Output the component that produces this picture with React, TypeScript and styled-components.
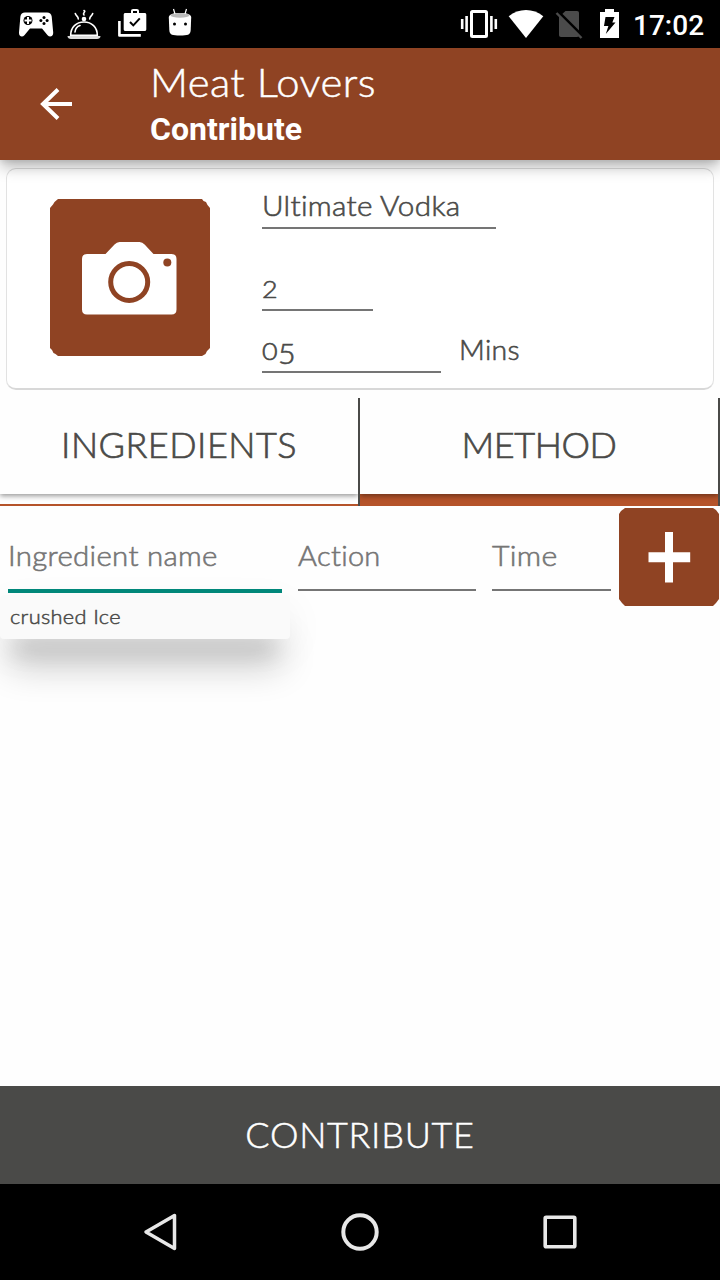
import React from "react";
import styled, { createGlobalStyle } from "styled-components";

const GlobalStyle = createGlobalStyle`
  * { box-sizing: border-box; }
  body { margin: 0; background: #fff; }
`;

const thin = `Lato, "Open Sans", sans-serif`;
const brown = "#8f4323";

const Screen = styled.div`
  width: 720px;
  height: 1280px;
  display: flex;
  flex-direction: column;
  overflow: hidden;
  background: #fefefe;
  color: #4a4a48;
  font-family: ${thin};
`;

const StatusBar = styled.header`
  display: flex;
  justify-content: space-between;
  flex: 0 0 48px;
  height: 48px;
  padding: 0 15px 0 18px;
  background: #000;
`;

const StatusGroup = styled.div`
  display: flex;
  height: 48px;
`;

const Clock = styled.span`
  width: 79px;
  height: 48px;
  padding-left: 7px;
  font: 500 28px/51px Roboto, sans-serif;
  color: #fff;
  white-space: nowrap;
`;

const Icon = styled.svg`
  display: block;
  flex: none;
`;

const AppBar = styled.div`
  position: relative;
  z-index: 2;
  display: flex;
  align-items: center;
  flex: 0 0 112px;
  padding-left: 38px;
  background: ${brown};
  box-shadow: 0 8px 14px -1px rgba(0, 0, 0, 0.28), 0 1px 6px rgba(0, 0, 0, 0.1);
`;

const Titles = styled.div`
  align-self: flex-start;
  padding: 11px 0 0 76px;
  color: #fff;
`;

const Title = styled.h1`
  margin: 0;
  height: 47px;
  font: 300 40px/46px ${thin};
  letter-spacing: 0.4px;
  transform: scaleX(1.045);
  transform-origin: left;
  -webkit-text-stroke: 0.5px currentColor;
`;

const Subtitle = styled.h2`
  margin: 0;
  font: 700 32px/46px Roboto, sans-serif;
`;

const Card = styled.section`
  display: flex;
  flex: 0 0 222px;
  margin: 8px 6px;
  padding: 30px 0 0 43px;
  border: 1px solid #e2e2e2;
  border-top-color: #dcdcdc;
  border-bottom: 2px solid #d8d8d8;
  border-radius: 10px;
  background: #fff;
`;

const Details = styled.div`
  display: flex;
  flex-direction: column;
  margin-left: 52px;
`;

const Field = styled.div<{ $width: number; $height?: number; $top?: number }>`
  width: ${(p) => p.$width}px;
  height: ${(p) => p.$height ?? 40}px;
  margin-top: ${(p) => p.$top ?? 0}px;
  border-bottom: 2px solid #757575;
`;

const Label = styled.span<{ $stretch?: number; $hint?: boolean; $line?: number }>`
  display: block;
  font: 300 28px/${(p) => p.$line ?? 32}px ${thin};
  letter-spacing: 0.3px;
  transform: scaleX(${(p) => p.$stretch ?? 1});
  transform-origin: left;
  color: ${(p) => (p.$hint ? "#757575" : "#4a4a48")};
  -webkit-text-stroke: 0.6px currentColor;
  white-space: nowrap;
`;

const Digit = styled.span<{ $drop?: number; $size?: number }>`
  display: inline-block;
  margin-right: 1.7px;
  font-size: ${(p) => p.$size ?? 24}px;
  line-height: 1;
  transform: translateY(${(p) => p.$drop ?? 0}px) scaleX(1.12);
  transform-origin: left;
`;

const TimeRow = styled.div`
  display: flex;
  gap: 18px;
  margin-top: 22px;
`;

const Tabs = styled.nav`
  display: flex;
  flex: 0 0 108px;
`;

const Tab = styled.div<{ $active?: boolean }>`
  flex: 1;
  height: 108px;
  border-right: 2px solid #4a4a48;
  background: ${(p) =>
    p.$active ? "#b5532a" : "linear-gradient(#fefefe 106px, #b5532a 106px)"};
`;

const TabFace = styled.div<{ $spacing: number }>`
  height: 96px;
  background: #fefefe;
  box-shadow: 0 2px 5px rgba(0, 0, 0, 0.4);
  clip-path: inset(0 0 -12px 0);
  text-align: center;
  font: 300 36px/93px ${thin};
  letter-spacing: ${(p) => p.$spacing}px;
  -webkit-text-stroke: 0.7px currentColor;
`;

const EntryRow = styled.div`
  position: relative;
  display: flex;
  flex: 0 0 102px;
  padding: 0 1px 0 8px;
`;

const EntryField = styled.div<{ $width: number; $gap: number; $focus?: boolean }>`
  width: ${(p) => p.$width}px;
  height: ${(p) => (p.$focus ? 87 : 85)}px;
  margin-right: ${(p) => p.$gap}px;
  padding-top: 33px;
  border-bottom: ${(p) => (p.$focus ? "4px solid #00897b" : "2px solid #757575")};
`;

const AddButton = styled.div`
  margin-top: 2px;
`;

const Suggestions = styled.div`
  position: absolute;
  left: 0;
  top: 89px;
  width: 290px;
  height: 44px;
  padding-left: 10px;
  border-radius: 4px;
  background: #fafafa;
  box-shadow: 0 30px 20px -14px rgba(0, 0, 0, 0.1),
    0 36px 36px -8px rgba(0, 0, 0, 0.2), 0 12px 40px rgba(0, 0, 0, 0.06);
`;

const Suggestion = styled.span`
  display: inline-block;
  font: 300 20px/43px ${thin};
  letter-spacing: 0.3px;
  transform: scaleX(1.09);
  transform-origin: left;
  -webkit-text-stroke: 0.5px currentColor;
`;

const Spacer = styled.main`
  flex: 1;
`;

const Submit = styled.div`
  flex: 0 0 98px;
  background: #4a4a48;
  color: #fff;
  text-align: center;
  font: 300 36px/97px ${thin};
  letter-spacing: 0.7px;
  -webkit-text-stroke: 0.5px currentColor;
`;

const NavBar = styled.footer`
  display: flex;
  align-items: center;
  justify-content: center;
  gap: 160px;
  flex: 0 0 96px;
  background: #000;
`;

const Gamepad = () => (
  <Icon width="42" height="48" viewBox="18 0 42 48">
    <path
      d="M25 12.5h22c2.6 0 4.3 1.4 4.700 4l1.500 16c.3 3.700-3.400 5.200-5.600 2.700L42 28.500H30l-5.600 6.700c-2.200 2.500-5.700 1-5.400-2.700l1.400-16c.4-2.600 2-4 4.600-4Z"
      fill="#fff"
    />
    <circle cx="28" cy="20.5" r="4.5" fill="#000" />
    <path d="M28 17v7M24.5 20.5h7" stroke="#fff" strokeWidth="2" />
    <g fill="#000">
      <circle cx="44" cy="17.4" r="1.5" />
      <circle cx="44" cy="23.6" r="1.5" />
      <circle cx="40.9" cy="20.5" r="1.5" />
      <circle cx="47.1" cy="20.5" r="1.5" />
    </g>
  </Icon>
);

const Cloche = () => (
  <Icon width="50" height="48" viewBox="60 0 50 48">
    <g fill="none" stroke="#fff" strokeWidth="1.6" strokeLinecap="round">
      <path d="M70.7 35.3c0-8 5.5-13.3 13.3-13.3s13.3 5.3 13.3 13.3Z" />
      <path d="M75 32c.3-3.5 2-5.5 5-6.5" />
      <path d="M75.3 13.5c.5 2.5 3 2.5 3 5.5M92.7 13.5c-.5 2.5-3 2.5-3 5.5M84 10.5c2.5 1-2 2.5 0 4.5" />
    </g>
    <circle cx="84" cy="19" r="2.3" fill="#fff" />
    <path d="M67.5 36h33c0 2-1.5 3-3.5 3H71c-2 0-3.5-1-3.5-3Z" fill="#ddd" />
  </Icon>
);

const ShopCheck = () => (
  <Icon width="50" height="48" viewBox="110 0 50 48">
    <path
      fillRule="evenodd"
      fill="#fff"
      d="M131 13v-1.8c0-1.5.8-2.2 2.2-2.2h3.6c1.4 0 2.2.7 2.2 2.2V13h5.500c1.200 0 1.800.6 1.800 1.800v14.400c0 1.200-.6 1.800-1.800 1.800h-19c-1.200 0-1.800-.6-1.800-1.800V14.800c0-1.200.6-1.800 1.800-1.800Zm2 0h4v-2h-4Z"
    />
    <path d="m130 22 3.3 3.4 6.5-7" fill="none" stroke="#000" strokeWidth="2" />
    <path d="M119.4 21v14.400h21.400" fill="none" stroke="#fff" strokeWidth="2.6" strokeLinejoin="round" />
  </Icon>
);

const Droid = () => (
  <Icon width="40" height="48" viewBox="160 0 40 48">
    <path d="M168.8 17c0-5.500 22.400-5.500 22.400 0l-.5 13c-.3 5-3.200 5.500-10.700 5.500s-10.400-.5-10.700-5.500Z" fill="#fff" />
    <ellipse cx="180" cy="15.3" rx="9.5" ry="2.4" fill="#bbb" />
    <path d="m173.5 9 1.5 5M186.500 9l-1.500 5" stroke="#fff" strokeWidth="1.2" />
    <circle cx="174.5" cy="24" r="1.5" fill="#000" />
    <circle cx="185.5" cy="24" r="1.5" fill="#000" />
  </Icon>
);

const Vibrate = () => (
  <Icon width="47" height="48" viewBox="455 0 47 48">
    <rect x="471.5" y="11.5" width="15" height="25" rx="1" fill="none" stroke="#fff" strokeWidth="3" />
    <path d="M462.2 19v10M466.600 16v16M491.400 16v16M495.800 19v10" stroke="#fff" strokeWidth="2.6" />
  </Icon>
);

const Wifi = () => (
  <Icon width="48" height="48" viewBox="502 0 48 48">
    <path d="M508.7 16.3c10-8.400 24.600-8.400 34.600 0L526 38Z" fill="#fff" />
  </Icon>
);

const NoSim = () => (
  <Icon width="42" height="48" viewBox="550 0 42 48">
    <path d="M565.5 11H577c1.300 0 2 .7 2 2v22c0 1.300-.7 2-2 2h-16c-1.300 0-2-.7-2-2V17Z" fill="#4b4b4b" />
    <path d="m558 11.5 25 25" stroke="#000" strokeWidth="3" />
    <path d="m556.5 13 25 25" stroke="#4b4b4b" strokeWidth="2.4" />
  </Icon>
);

const Battery = () => (
  <Icon width="34" height="48" viewBox="592 0 34 48">
    <path d="M605 9h9v3h5v26h-19V12h5Z" fill="#fff" />
    <path d="M605.5 17h9l-2.200 5.500h3.200L605.800 34l2.600-8h-4.400Z" fill="#000" />
  </Icon>
);

const Camera = () => (
  <Icon width="160" height="158" viewBox="50 199 160 158">
    <path d="M58 199h144l1.500 2 2.500 1 1.500 3 2.500 3v140l-3 3-1.500 3-3.500 2H58l-2.500-2-2-1-1.500-3-2-2V208l3-3.500 1.500-2.500Z" fill={brown} />
    <path
      d="M87 254H105.500L114.500 244.500Q116.800 242 119.500 242H139.500Q142.500 242 144.600 244.500L153.500 254H171.500Q176.500 254 176.500 259V309.500Q176.500 314.500 171.500 314.500H87Q82 314.500 82 309.500V259Q82 254 87 254Z"
      fill="#fff"
    />
    <circle cx="129.2" cy="282" r="18.5" fill="none" stroke={brown} strokeWidth="5" />
    <circle cx="167.3" cy="262.5" r="4" fill={brown} />
  </Icon>
);

export default function App() {
  return (
    <>
      <GlobalStyle />
      <Screen>
        <StatusBar>
          <StatusGroup>
            <Gamepad />
            <Cloche />
            <ShopCheck />
            <Droid />
          </StatusGroup>
          <StatusGroup>
            <Vibrate />
            <Wifi />
            <NoSim />
            <Battery />
            <Clock>17:02</Clock>
          </StatusGroup>
        </StatusBar>
        <AppBar>
          <Icon width="36" height="36" viewBox="38 86 36 36">
            <path d="M72 104H43M58 89.500 43 104l15 14.500" fill="none" stroke="#fff" strokeWidth="4" />
          </Icon>
          <Titles>
            <Title>Meat Lovers</Title>
            <Subtitle>Contribute</Subtitle>
          </Titles>
        </AppBar>
        <Card>
          <Camera />
          <Details>
            <Field $width={234} $height={39} $top={-9}>
              <Label $stretch={1.06} $line={30}>Ultimate Vodka</Label>
            </Field>
            <Field $width={111} $top={42}>
              <Label><Digit>2</Digit></Label>
            </Field>
            <TimeRow>
              <Field $width={179}>
                <Label>
                  <Digit>0</Digit>
                  <Digit $drop={4} $size={27}>5</Digit>
                </Label>
              </Field>
              <Label $stretch={1.015}>Mins</Label>
            </TimeRow>
          </Details>
        </Card>
        <Tabs>
          <Tab>
            <TabFace $spacing={0.5}>INGREDIENTS</TabFace>
          </Tab>
          <Tab $active>
            <TabFace $spacing={-0.4}>METHOD</TabFace>
          </Tab>
        </Tabs>
        <EntryRow>
          <EntryField $width={274} $gap={16} $focus>
            <Label $hint $stretch={1.05}>Ingredient name</Label>
          </EntryField>
          <EntryField $width={178} $gap={16}>
            <Label $hint $stretch={1.035}>Action</Label>
          </EntryField>
          <EntryField $width={119} $gap={8}>
            <Label $hint $stretch={1.08}>Time</Label>
          </EntryField>
          <AddButton>
            <Icon width="100" height="98" viewBox="0 0 100 98">
              <path d="M6 0h88l3 2 3 4v85l-3 4-3 3H6l-3-3-3-4V6l2-3Z" fill={brown} />
              <path d="M50 24v50.500" stroke="#fff" strokeWidth="8" />
              <path d="M29.500 49.300H71.200" stroke="#fff" strokeWidth="10" />
            </Icon>
          </AddButton>
          <Suggestions>
            <Suggestion>crushed Ice</Suggestion>
          </Suggestions>
        </EntryRow>
        <Spacer />
        <Submit>CONTRIBUTE</Submit>
        <NavBar>
          <Icon width="40" height="40" viewBox="140 1212 40 40">
            <path d="M174.500 1215.500v33L146 1232Z" fill="none" stroke="#e8e8e8" strokeWidth="3.5" strokeLinejoin="round" />
          </Icon>
          <Icon width="40" height="40" viewBox="340 1212 40 40">
            <circle cx="360" cy="1232" r="16.7" fill="none" stroke="#e8e8e8" strokeWidth="4" />
          </Icon>
          <Icon width="40" height="40" viewBox="540 1212 40 40">
            <rect x="545.2" y="1217.2" width="29.6" height="29.6" rx="1" fill="none" stroke="#e8e8e8" strokeWidth="3.6" />
          </Icon>
        </NavBar>
      </Screen>
    </>
  );
}
